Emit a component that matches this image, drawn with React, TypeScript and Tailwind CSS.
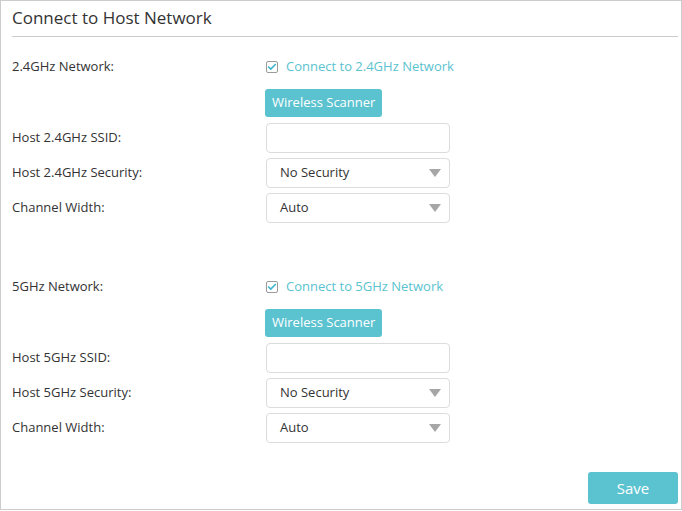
import { Check } from "lucide-react";

type Band = {
  name: string;
};

const bands: Band[] = [{ name: "2.4GHz" }, { name: "5GHz" }];

function Row({ label, children, className = "" }: { label: string; children: React.ReactNode; className?: string }) {
  return (
    <div className={`flex items-center h-[30px] ${className}`}>
      <div className="w-[265px] pl-[11px] text-[13px] text-[#333]">{label}</div>
      {children}
    </div>
  );
}

function SelectBox({ value }: { value: string }) {
  return (
    <div className="w-[184px] h-[30px] border border-[#dcdcdc] rounded-[4px] flex items-center justify-between pl-[13px] pr-[8px] text-[13px] text-[#333]">
      <span>{value}</span>
      <svg width="12" height="8" viewBox="0 0 12 8">
        <path d="M0 0 H12 L6 8 Z" fill="#a6a6a6" />
      </svg>
    </div>
  );
}

function BandSection({ band, className = "" }: { band: Band; className?: string }) {
  return (
    <div className={className}>
      <Row label={`${band.name} Network:`}>
        <label className="flex items-center gap-[8px] text-[13px] text-[#5ac3cf]">
          <span className="w-[12px] h-[12px] border border-[#9a9a9a] rounded-[2px] flex items-center justify-center bg-white">
            <Check className="w-[10px] h-[10px] text-[#3fb6cf]" strokeWidth={4} />
          </span>
          Connect to {band.name} Network
        </label>
      </Row>
      <div className="mt-[7px] pl-[264px]">
        <button className="h-[28px] px-[7px] bg-[#5bc2cf] text-white text-[13px] rounded-[3px]">Wireless Scanner</button>
      </div>
      <Row label={`Host ${band.name} SSID:`} className="mt-[6px]">
        <div className="w-[184px] h-[30px] border border-[#dcdcdc] rounded-[4px]" />
      </Row>
      <Row label={`Host ${band.name} Security:`} className="mt-[5px]">
        <SelectBox value="No Security" />
      </Row>
      <Row label="Channel Width:" className="mt-[5px]">
        <SelectBox value="Auto" />
      </Row>
    </div>
  );
}

export default function App() {
  return (
    <div
      className="w-[682px] h-[510px] border border-[#cccccc] bg-white flex flex-col"
      style={{ fontFamily: '"Open Sans", "Noto Sans", sans-serif' }}
    >
      <div className="ml-[11px] mr-[3px] h-[36px] border-b border-[#cccccc] flex items-center pb-[1px]">
        <h1 className="text-[17px] text-[#333]">Connect to Host Network</h1>
      </div>
      <BandSection band={bands[0]} className="mt-[15px]" />
      <BandSection band={bands[1]} className="mt-[49px]" />
      <div className="mt-auto mb-[5px] mr-[3px] flex justify-end">
        <button className="w-[90px] h-[32px] bg-[#5bc2cf] text-white text-[15px] rounded-[3px]">Save</button>
      </div>
    </div>
  );
}
